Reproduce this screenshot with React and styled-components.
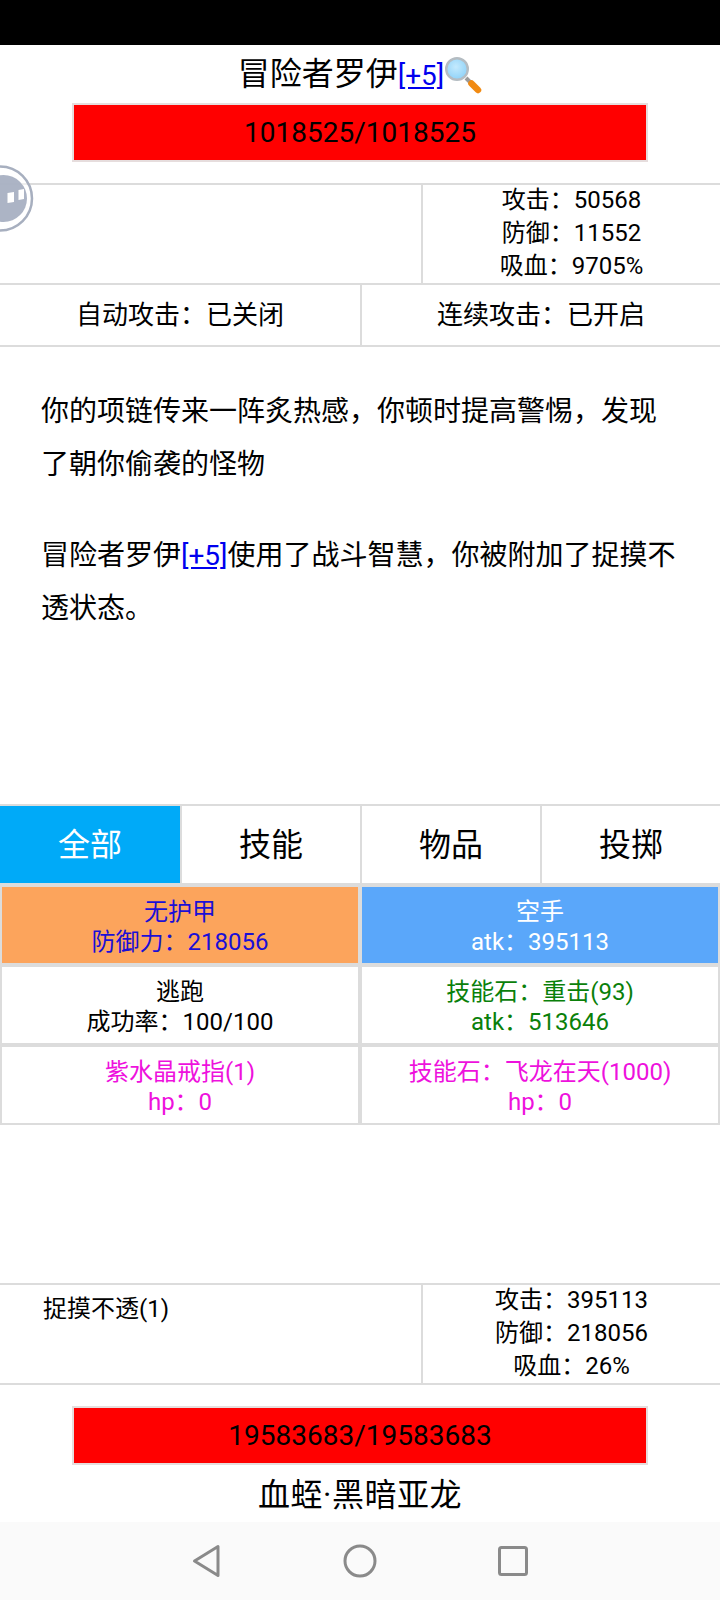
import React from "react";
import styled, { createGlobalStyle } from "styled-components";

const Global = createGlobalStyle`
  html, body { margin: 0; padding: 0; background: #fff; }
  body { font-family: Roboto, "Noto Sans CJK SC", sans-serif; color: #000; }
  * { box-sizing: border-box; }
`;

const line = "#dcdcdc";

const Page = styled.div`
  position: relative;
  width: 720px;
  height: 1600px;
  overflow: hidden;
  display: flex;
  flex-direction: column;
  background: #fff;
`;
const StatusBar = styled.div`
  height: 45px;
  background: #000;
  flex: none;
`;
const TitleRow = styled.div`
  height: 58px;
  flex: none;
  display: flex;
  align-items: baseline;
  justify-content: center;
  font-size: 32px;
  line-height: 54px;
  padding-top: 2px;
`;
const Link = styled.a`
  color: #0000ee;
  text-decoration: underline;
  font-size: 28px;
`;
const Bar = styled.div`
  width: 576px;
  height: 59px;
  margin: ${(p) => p.$top || 0}px auto 0;
  flex: none;
  background: #ff0000;
  border: 2px solid #e6dddd;
  display: flex;
  align-items: center;
  justify-content: center;
  font-size: 28px;
`;
const InfoRow = styled.div`
  margin-top: ${(p) => p.$top}px;
  height: 102px;
  flex: none;
  display: grid;
  grid-template-columns: 423px 1fr;
  border-top: 2px solid ${line};
  border-bottom: 2px solid ${line};
`;
const Effects = styled.div`
  border-right: 2px solid ${line};
  padding: 8px 0 0 43px;
  font-size: 24px;
  line-height: 32px;
`;
const Stats = styled.div`
  display: flex;
  flex-direction: column;
  align-items: center;
  margin-top: -1px;
  font-size: 24px;
  line-height: 33px;
`;
const ToggleRow = styled.div`
  height: 62px;
  flex: none;
  display: grid;
  grid-template-columns: 360px 1fr;
  border-bottom: 2px solid ${line};
`;
const Toggle = styled.div`
  display: flex;
  align-items: center;
  justify-content: center;
  padding-bottom: 6px;
  font-size: 26px;
  & + & { border-left: 2px solid ${line}; }
`;
const Log = styled.div`
  height: 457px;
  flex: none;
  padding: 38px 36px 0 41px;
  font-size: 28px;
  line-height: 53px;
`;
const LogEntry = styled.p`
  margin: 0 0 38px;
`;
const Tabs = styled.div`
  height: 79px;
  flex: none;
  display: grid;
  grid-template-columns: repeat(4, 1fr);
  border-top: 2px solid ${line};
`;
const Tab = styled.div`
  display: flex;
  align-items: center;
  justify-content: center;
  padding-bottom: 6px;
  font-size: 32px;
  background: ${(p) => (p.$active ? "#00aaf8" : "#fff")};
  color: ${(p) => (p.$active ? "#fff" : "#000")};
  & + & { border-left: 2px solid ${line}; }
`;
const Grid = styled.div`
  flex: none;
  display: grid;
  grid-template-columns: 1fr 1fr;
  grid-auto-rows: 76px;
  gap: 4px;
  padding: 4px 2px 2px;
  background: ${line};
`;
const Cell = styled.div`
  display: flex;
  flex-direction: column;
  align-items: center;
  justify-content: center;
  padding-top: 4px;
  font-size: 24px;
  line-height: 30px;
  background: ${(p) => p.$bg || "#fff"};
  color: ${(p) => p.$color || "#000"};
`;
const Spacer = styled.div`
  flex: 1;
`;
const Name = styled.div`
  height: 57px;
  flex: none;
  display: flex;
  align-items: center;
  justify-content: center;
  padding-bottom: 4px;
  font-size: 32px;
  letter-spacing: 0.5px;
`;
const NavBar = styled.div`
  height: 78px;
  flex: none;
  background: #fafafa;
  display: flex;
  align-items: center;
  justify-content: center;
  gap: 117px;
`;
const Floating = styled.div`
  position: absolute;
  left: -33px;
  top: 165px;
  width: 67px;
  height: 67px;
`;
const MagnifierIcon = styled.svg`
  align-self: center;
  flex: none;
`;

const Magnifier = () => (
  <MagnifierIcon width="38" height="38" viewBox="0 0 38 38">
    <defs>
      <radialGradient id="lens" cx="45%" cy="40%" r="60%">
        <stop offset="0" stopColor="#c4eafd" />
        <stop offset="1" stopColor="#8fd2f8" />
      </radialGradient>
    </defs>
    <path d="M22 22 L27 27" stroke="#9a9a9a" strokeWidth="4" />
    <path d="M27.5 27.5 L34 34" stroke="#f18a12" strokeWidth="6.5" strokeLinecap="round" />
    <circle cx="13" cy="13" r="10.8" fill="url(#lens)" stroke="#b4bcc2" strokeWidth="2.4" />
  </MagnifierIcon>
);

const NavIcon = ({ children }) => (
  <svg width="36" height="36" viewBox="0 0 36 36" fill="none" stroke="#8a8a8a" strokeWidth="3" strokeLinejoin="round">
    {children}
  </svg>
);

const stats = (a, d, l) => (
  <Stats>
    <span>攻击：{a}</span>
    <span>防御：{d}</span>
    <span>吸血：{l}</span>
  </Stats>
);

export default function App() {
  return (
    <Page>
      <Global />
      <StatusBar />
      <TitleRow>
        <span>冒险者罗伊</span>
        <Link>[+5]</Link>
        <Magnifier />
      </TitleRow>
      <Bar>1018525/1018525</Bar>
      <InfoRow $top={21}>
        <Effects />
        {stats("50568", "11552", "9705%")}
      </InfoRow>
      <ToggleRow>
        <Toggle>自动攻击：已关闭</Toggle>
        <Toggle>连续攻击：已开启</Toggle>
      </ToggleRow>
      <Log>
        <LogEntry>你的项链传来一阵炙热感，你顿时提高警惕，发现了朝你偷袭的怪物</LogEntry>
        <LogEntry>
          冒险者罗伊<Link>[+5]</Link>使用了战斗智慧，你被附加了捉摸不透状态。
        </LogEntry>
      </Log>
      <Tabs>
        <Tab $active>全部</Tab>
        <Tab>技能</Tab>
        <Tab>物品</Tab>
        <Tab>投掷</Tab>
      </Tabs>
      <Grid>
        <Cell $bg="#fca45c" $color="#1a0fd6">
          <span>无护甲</span>
          <span>防御力：218056</span>
        </Cell>
        <Cell $bg="#5aa7fa" $color="#fff">
          <span>空手</span>
          <span>atk：395113</span>
        </Cell>
        <Cell>
          <span>逃跑</span>
          <span>成功率：100/100</span>
        </Cell>
        <Cell $color="#0a800a">
          <span>技能石：重击(93)</span>
          <span>atk：513646</span>
        </Cell>
        <Cell $color="#ee11dd">
          <span>紫水晶戒指(1)</span>
          <span>hp：0</span>
        </Cell>
        <Cell $color="#ee11dd">
          <span>技能石：飞龙在天(1000)</span>
          <span>hp：0</span>
        </Cell>
      </Grid>
      <Spacer />
      <InfoRow $top={0}>
        <Effects>捉摸不透(1)</Effects>
        {stats("395113", "218056", "26%")}
      </InfoRow>
      <Bar $top={21}>19583683/19583683</Bar>
      <Name>血蛭·黑暗亚龙</Name>
      <NavBar>
        <NavIcon>
          <path d="M29 3.5 L29 32.5 L5.5 18 Z" />
        </NavIcon>
        <NavIcon>
          <circle cx="18" cy="18" r="15" />
        </NavIcon>
        <NavIcon>
          <rect x="4.5" y="4.5" width="27" height="27" rx="2" />
        </NavIcon>
      </NavBar>
      <Floating>
        <svg width="67" height="67" viewBox="0 0 67 67">
          <circle cx="33" cy="33.5" r="32" fill="rgba(255,255,255,0.55)" stroke="#a7afbf" strokeWidth="2.5" />
          <circle cx="36.5" cy="33.5" r="23.5" fill="#a5aec0" fillOpacity="0.92" />
          <path d="M40.5 28 L47 27 L47 37 L40.5 38 Z M51.5 25 L57 24 L57 34 L51.5 35 Z" fill="#fff" />
        </svg>
      </Floating>
    </Page>
  );
}
